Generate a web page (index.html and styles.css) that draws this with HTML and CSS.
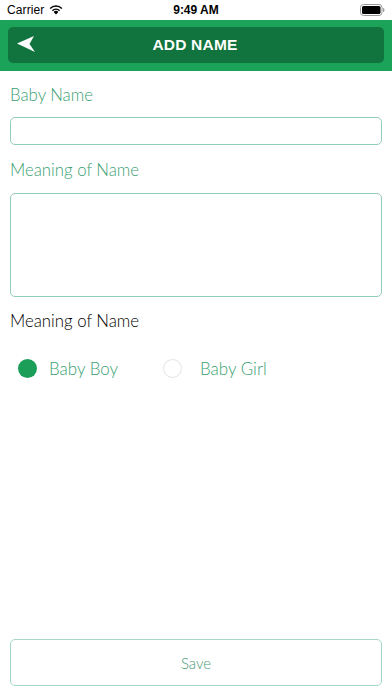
FILE: index.html
```html
<!DOCTYPE html>
<html>
<head>
<meta charset="utf-8">
<link rel="stylesheet" href="styles.css">
</head>
<body>
<div class="page">
  <div class="status">
    <div class="status-left">
      <span class="carrier">Carrier</span>
      <svg class="wifi" width="14" height="11" viewBox="0 0 14 11">
        <path d="M7 10.5 L4.6 7.9 A3.4 3.4 0 0 1 9.4 7.9 Z" fill="#000"/>
        <path d="M2.9 6.2 A5.9 5.9 0 0 1 11.1 6.2 L10.1 7.2 A4.5 4.5 0 0 0 3.9 7.2 Z" fill="#000"/>
        <path d="M0.6 3.9 A9.2 9.2 0 0 1 13.4 3.9 L12.4 4.9 A7.8 7.8 0 0 0 1.6 4.9 Z" fill="#000"/>
      </svg>
    </div>
    <div class="time">9:49 AM</div>
    <div class="status-right">
      <svg class="battery" width="25" height="12" viewBox="0 0 25 12">
        <rect x="0.5" y="0.5" width="21.5" height="11" rx="3" fill="none" stroke="#999" stroke-width="1"/>
        <rect x="2" y="2" width="18.5" height="8" rx="1.6" fill="#000"/>
        <path d="M23 4 Q24.5 4 24.5 6 Q24.5 8 23 8 Z" fill="#999"/>
      </svg>
    </div>
  </div>
  <div class="appbar">
    <div class="title-box">
      <svg class="back" width="19" height="18" viewBox="0 0 19 18">
        <path d="M0 8.5 L17 1 L12.5 9 L18 17 Z" fill="#fff"/>
      </svg>
      <span class="title">ADD NAME</span>
    </div>
  </div>
  <div class="content">
    <div class="label green first">Baby Name</div>
    <div class="input"></div>
    <div class="label green second">Meaning of Name</div>
    <div class="textarea"></div>
    <div class="label dark third">Meaning of Name</div>
    <div class="radios">
      <div class="radio">
        <span class="dot filled"></span>
        <span class="radio-text">Baby Boy</span>
      </div>
      <div class="radio girl">
        <span class="dot empty"></span>
        <span class="radio-text">Baby Girl</span>
      </div>
    </div>
    <div class="save">Save</div>
  </div>
</div>
</body>
</html>
```

FILE: styles.css
```css
html, body {
  margin: 0;
  padding: 0;
  background: #fff;
}
.page {
  width: 392px;
  height: 696px;
  display: flex;
  flex-direction: column;
  font-family: "Lato", "Noto Sans", sans-serif;
}
.status {
  height: 20px;
  display: flex;
  align-items: center;
  justify-content: space-between;
  padding: 0 7px;
  font-family: "Liberation Sans", Arial, sans-serif;
  font-size: 12px;
  color: #000;
  position: relative;
}
.status-left {
  display: flex;
  align-items: center;
  gap: 5px;
}
.carrier {
  letter-spacing: 0.1px;
}
.wifi {
  margin-top: -1px;
}
.time {
  position: absolute;
  left: 0;
  right: 0;
  text-align: center;
  font-weight: bold;
  pointer-events: none;
}
.status-right {
  display: flex;
  align-items: center;
}
.appbar {
  background: #1aa359;
  padding: 7px 8px 8px;
}
.title-box {
  height: 36px;
  background: #11733d;
  border-radius: 5px;
  display: flex;
  align-items: center;
  justify-content: center;
  position: relative;
}
.back {
  position: absolute;
  left: 9px;
  top: 8px;
}
.title {
  font-family: "Liberation Sans", Arial, sans-serif;
  font-weight: bold;
  font-size: 15.5px;
  color: #fff;
  letter-spacing: 0.2px;
  margin-left: -2px;
}
.content {
  flex: 1;
  display: flex;
  flex-direction: column;
  padding: 0 10px 10px;
}
.label {
  font-size: 16.8px;
  font-weight: 300;
  line-height: 20px;
  height: 20px;
}
.label.green {
  color: #3aa072;
}
.label.dark {
  color: #000;
}
.first {
  margin-top: 14px;
}
.second {
  margin-top: 15px;
}
.third {
  margin-top: 14px;
}
.input {
  margin-top: 12px;
  height: 28px;
  border: 1px solid #93cdb6;
  border-radius: 5px;
  box-sizing: border-box;
}
.textarea {
  margin-top: 13px;
  height: 104px;
  border: 1px solid #93cdb6;
  border-radius: 5px;
  box-sizing: border-box;
}
.radios {
  margin-top: 27px;
  height: 20px;
  display: flex;
  align-items: center;
  padding-left: 8px;
}
.radio {
  display: flex;
  align-items: center;
  width: 145px;
}
.dot {
  width: 19px;
  height: 19px;
  border-radius: 50%;
  box-sizing: border-box;
  flex: none;
}
.dot.filled {
  background: #1b9e57;
}
.dot.empty {
  border: 1px solid #e4e4e4;
}
.radio-text {
  margin-left: 12px;
  font-size: 17px;
  font-weight: 300;
  color: #3aa072;
}
.girl .radio-text {
  margin-left: 18px;
}
.save {
  margin-top: auto;
  height: 47px;
  border: 1px solid #a5d8c4;
  border-radius: 5px;
  box-sizing: border-box;
  display: flex;
  align-items: center;
  justify-content: center;
  font-size: 15px;
  font-weight: 300;
  color: #4a9a78;
}
```
